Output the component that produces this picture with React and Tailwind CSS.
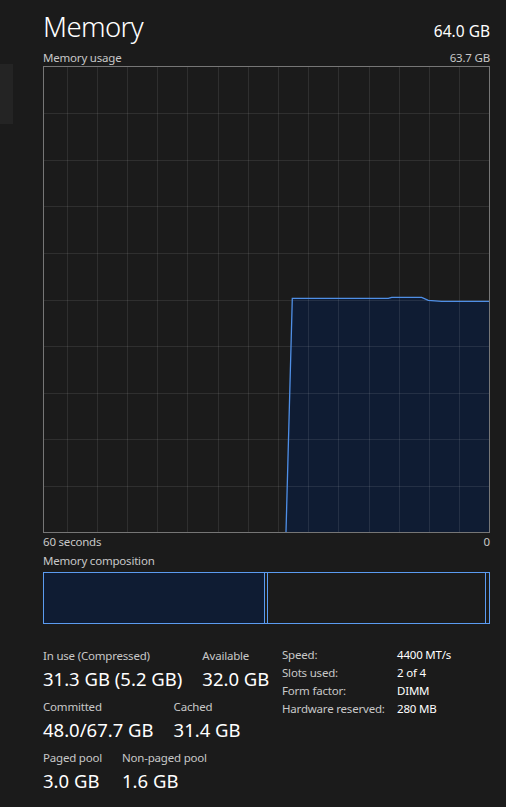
import React from "react";

const W = 447;
const H = 467;

function UsageChart() {
  const vLines = [];
  for (let i = 0; i < 14; i++) vLines.push(23.5 + i * 30.2);
  const hLines = [];
  for (let i = 1; i < 10; i++) hLines.push(0.5 + i * 46.6);
  const pts = [
    [243, 466],
    [249.3, 232.3],
    [345.3, 232.3],
    [348.7, 231.3],
    [378.7, 231.3],
    [385.3, 234.3],
    [398.7, 235.3],
    [446, 235.3],
  ];
  const line = pts.map((p, i) => (i ? "L" : "M") + p[0] + " " + p[1]).join(" ");
  const fill = line + " L446 466 Z";
  return (
    <svg width={W} height={H} viewBox={`0 0 ${W} ${H}`} className="block">
      <path d={fill} fill="#0f1c33" />
      {vLines.map((x) => (
        <line key={"v" + x} x1={Math.round(x) + 0.5} y1="0" x2={Math.round(x) + 0.5} y2={H} stroke="#ffffff" strokeOpacity="0.09" strokeWidth="1" />
      ))}
      {hLines.map((y) => (
        <line key={"h" + y} x1="0" y1={Math.round(y) + 0.5} x2={W} y2={Math.round(y) + 0.5} stroke="#ffffff" strokeOpacity="0.09" strokeWidth="1" />
      ))}
      <path d={line} fill="none" stroke="#4f8fe6" strokeWidth="1.3" />
      <rect x="0.5" y="0.5" width={W - 1} height={H - 1} fill="none" stroke="#767676" strokeWidth="1" />
    </svg>
  );
}

function Stat({ label, value }) {
  return (
    <div className="flex flex-col">
      <div className="text-[11.5px] tracking-[-0.2px] leading-[18px] text-[#c8c8c8] whitespace-nowrap">{label}</div>
      <div className="text-[18.5px] leading-[28px] text-white whitespace-nowrap">{value}</div>
    </div>
  );
}

export default function App() {
  return (
    <div
      className="w-[506px] h-[807px] bg-[#1b1b1b] flex overflow-hidden"
      style={{ fontFamily: '"Noto Sans", "Open Sans", sans-serif' }}
    >
      <div className="w-[13px] shrink-0 pt-[64px]">
        <div className="h-[60px] bg-[#242424]" />
      </div>
      <div className="flex-1 pl-[30px] pr-[16px] flex flex-col">
        <div className="flex justify-between items-baseline pt-[9px]">
          <div className="text-[27.5px] tracking-[-0.6px] leading-[36px] text-white font-light">Memory</div>
          <div className="text-[15.5px] leading-[20px] text-white">64.0 GB</div>
        </div>
        <div className="mt-[5px] flex justify-between text-[11.5px] tracking-[-0.2px] leading-[16px] text-[#c8c8c8]">
          <span>Memory usage</span>
          <span>63.7 GB</span>
        </div>
        <div>
          <UsageChart />
        </div>
        <div className="mt-[1px] flex justify-between text-[11.5px] tracking-[-0.2px] leading-[16px] text-[#c8c8c8]">
          <span>60 seconds</span>
          <span>0</span>
        </div>
        <div className="mt-[3px] text-[11.5px] tracking-[-0.2px] leading-[16px] text-[#c8c8c8]">Memory composition</div>
        <div className="mt-[3px] flex h-[52px]">
          <div className="w-[222px] border border-[#5b9bf0] bg-[#0f1c33]" />
          <div className="w-[4px] -ml-px border border-[#5b9bf0]" />
          <div className="w-[219px] -ml-px border border-[#5b9bf0]" />
          <div className="w-[5px] -ml-px border border-[#5b9bf0]" />
        </div>
        <div className="mt-[23px] flex items-start">
          <div className="w-[239px] flex flex-col gap-[5px]">
            <div className="flex gap-[20px]">
              <Stat label="In use (Compressed)" value="31.3 GB (5.2 GB)" />
              <Stat label="Available" value="32.0 GB" />
            </div>
            <div className="flex gap-[20px]">
              <Stat label="Committed" value="48.0/67.7 GB" />
              <Stat label="Cached" value="31.4 GB" />
            </div>
            <div className="flex gap-[20px]">
              <Stat label="Paged pool" value="3.0 GB" />
              <Stat label="Non-paged pool" value="1.6 GB" />
            </div>
          </div>
          <div className="grid grid-cols-[115px_auto] content-start text-[11.5px] tracking-[-0.2px] leading-[18px] text-[#c8c8c8] -mt-[1px]">
            <span>Speed:</span>
            <span className="text-white">4400 MT/s</span>
            <span>Slots used:</span>
            <span className="text-white">2 of 4</span>
            <span>Form factor:</span>
            <span className="text-white">DIMM</span>
            <span>Hardware reserved:</span>
            <span className="text-white">280 MB</span>
          </div>
        </div>
      </div>
    </div>
  );
}
